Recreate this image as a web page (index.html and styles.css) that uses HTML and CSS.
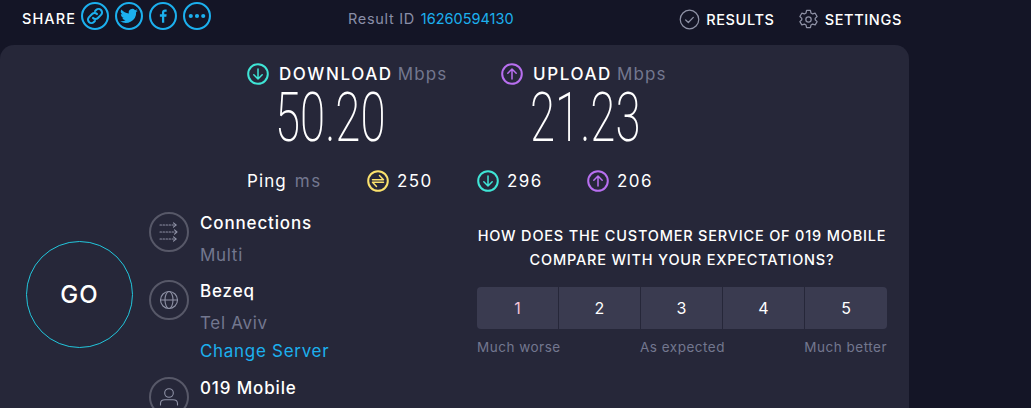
FILE: index.html
```html
<!DOCTYPE html>
<html lang="en">
<head>
<meta charset="utf-8">
<title>Speedtest Result</title>
<link rel="stylesheet" href="styles.css">
</head>
<body>
<header class="top">
  <div class="share">
    <span class="share-label">SHARE</span>
    <a class="share-btn"><svg viewBox="0 0 27 27"><circle cx="13.5" cy="13.5" r="12.5"/><path d="M11.600 15.400a3.300 3.300 0 0 0 4.700 0l3-3a3.300 3.300 0 0 0-4.700-4.700l-1.100 1.100M15.400 11.600a3.300 3.300 0 0 0-4.700 0l-3 3a3.300 3.300 0 0 0 4.700 4.700l1.100-1.100"/></svg></a>
    <a class="share-btn"><svg viewBox="0 0 27 27"><circle cx="13.5" cy="13.5" r="12.5"/><path class="fill" d="M22 8.400a7 7 0 0 1-2 .55 3.500 3.500 0 0 0 1.550-1.950 7 7 0 0 1-2.200.85 3.500 3.500 0 0 0-6 3.200 10 10 0 0 1-7.200-3.700 3.500 3.500 0 0 0 1.100 4.700 3.500 3.500 0 0 1-1.600-.45 3.500 3.500 0 0 0 2.800 3.450 3.500 3.500 0 0 1-1.550.06 3.500 3.500 0 0 0 3.250 2.430A7 7 0 0 1 5 18.500a10 10 0 0 0 15.400-8.900A7 7 0 0 0 22 8.400z"/></svg></a>
    <a class="share-btn"><svg viewBox="0 0 27 27"><circle cx="13.5" cy="13.5" r="12.500"/><path class="fill" d="M14.700 20v-5.800h2l.3-2.300h-2.300v-1.400c0-.7.200-1.100 1.100-1.100H17V7.300a12 12 0 0 0-1.500-.1c-1.800 0-3 1-3 3v1.700h-2v2.300h2V20z"/></svg></a>
    <a class="share-btn"><svg viewBox="0 0 27 27"><circle cx="13.500" cy="13.500" r="12.500"/><circle class="fill" cx="7.500" cy="13.500" r="2"/><circle class="fill" cx="13.500" cy="13.500" r="2"/><circle class="fill" cx="19.500" cy="13.500" r="2"/></svg></a>
  </div>
  <div class="result-id">Result ID <a class="link">16260594130</a></div>
  <nav class="nav">
    <a class="nav-item"><svg class="nav-icon" viewBox="0 0 22 22"><circle cx="11" cy="11" r="9.700"/><path d="M7 11.500l2.800 2.700L15 8.800"/></svg>RESULTS</a>
    <a class="nav-item"><svg class="nav-icon" viewBox="0 0 22 22"><path d="M9 1.500h4l.6 2.700 1.700 1 2.700-.8 2 3.400-2 2a6 6 0 0 1 0 1.400l2 2-2 3.400-2.700-.8-1.700 1-.6 2.700H9l-.6-2.700-1.700-1-2.700.8-2-3.400 2-2a6 6 0 0 1 0-1.400l-2-2 2-3.400 2.700.8 1.700-1z"/><circle cx="11" cy="11" r="2.800"/></svg>SETTINGS</a>
  </nav>
</header>

<main class="panel">
  <section class="speeds">
    <div class="speed">
      <div class="speed-head"><svg class="ic ic-lg teal" viewBox="0 0 22 22"><circle cx="11" cy="11" r="9.800"/><path class="arrow" d="M11 6v10M6.800 11.800L11 16l4.200-4.200"/></svg><span class="speed-name">DOWNLOAD</span><span class="unit">Mbps</span></div>
      <div class="speed-value"><span>50.20</span></div>
    </div>
    <div class="speed">
      <div class="speed-head"><svg class="ic ic-lg violet" viewBox="0 0 22 22"><circle cx="11" cy="11" r="9.800"/><path class="arrow" d="M11 16V6M6.800 10.200L11 6l4.200 4.200"/></svg><span class="speed-name">UPLOAD</span><span class="unit">Mbps</span></div>
      <div class="speed-value upload-value"><span>21.23</span></div>
    </div>
  </section>

  <section class="ping">
    <div class="ping-label">Ping <span class="unit">ms</span></div>
    <div class="ping-item"><svg class="ic yellow" viewBox="0 0 22 22"><circle cx="11" cy="11" r="9.800"/><path class="arrow" d="M5.500 9.700h11l-4-4.200M16.500 12.300h-11l4 4.200"/></svg>250</div>
    <div class="ping-item"><svg class="ic teal" viewBox="0 0 22 22"><circle cx="11" cy="11" r="9.800"/><path class="arrow" d="M11 6v10M6.800 11.800L11 16l4.200-4.200"/></svg>296</div>
    <div class="ping-item"><svg class="ic violet" viewBox="0 0 22 22"><circle cx="11" cy="11" r="9.800"/><path class="arrow" d="M11 16V6M6.800 10.200L11 6l4.200 4.200"/></svg>206</div>
  </section>

  <section class="body">
    <div class="go-col"><button class="go">GO</button></div>
    <div class="info">
      <div class="info-row">
        <svg class="info-icon" viewBox="0 0 40 40"><circle cx="20" cy="20" r="19"/><path class="thin dash" d="M11 13h16M11 20h17M11 27h16"/><path class="thin" d="M24.500 10.800l2.500 2.200-2.500 2.200M25.500 17.800l2.500 2.200-2.500 2.200M24.500 24.800l2.500 2.200-2.500 2.200"/></svg>
        <div><div class="info-title">Connections</div><div class="info-sub">Multi</div></div>
      </div>
      <div class="info-row">
        <svg class="info-icon" viewBox="0 0 40 40"><circle cx="20" cy="20" r="19"/><g class="thin"><circle cx="20" cy="20" r="8.500"/><ellipse cx="20" cy="20" rx="4" ry="8.500"/><path d="M11.500 20h17"/></g></svg>
        <div><div class="info-title">Bezeq</div><div class="info-sub">Tel Aviv</div><a class="change">Change Server</a></div>
      </div>
      <div class="info-row">
        <svg class="info-icon" viewBox="0 0 40 40"><circle cx="20" cy="20" r="19"/><g class="thin"><circle cx="20" cy="16" r="4.300"/><path d="M11.500 28v-1.500c0-2.500 2-3.800 4.500-3.800h8c2.500 0 4.500 1.300 4.500 3.800V28"/></g></svg>
        <div><div class="info-title">019 Mobile</div></div>
      </div>
    </div>
    <div class="survey">
      <h2 class="question">HOW DOES THE CUSTOMER SERVICE OF 019 MOBILE COMPARE WITH YOUR EXPECTATIONS?</h2>
      <div class="scale">
        <button class="rate first">1</button>
        <button class="rate">2</button>
        <button class="rate">3</button>
        <button class="rate">4</button>
        <button class="rate">5</button>
      </div>
      <div class="scale-labels"><span>Much worse</span><span>As expected</span><span>Much better</span></div>
    </div>
  </section>
</main>
</body>
</html>
```

FILE: styles.css
```css
* { box-sizing: border-box; }
html, body { height: 100%; }
body {
  margin: 0;
  overflow: hidden;
  background: #141526;
  color: #fff;
  font-family: Inter, "Liberation Sans", sans-serif;
}
svg { display: block; flex: none; fill: none; stroke-linecap: round; stroke-linejoin: round; }

.top { position: relative; display: flex; justify-content: space-between; height: 45px; width: 880px; margin-left: 22px; }
.share { display: flex; align-items: flex-start; gap: 6px; padding-top: 2px; }
.share-label { font-size: 14.5px; line-height: 36px; letter-spacing: 1.1px; margin: -1px -1px 0 0; font-weight: 500; }
.share-btn { width: 28px; height: 28px; }
.share-btn svg { stroke: #1cb0ee; stroke-width: 2; width: 28px; height: 28px; }
.share-btn .fill { fill: #1cb0ee; stroke: none; }
.result-id { position: absolute; left: 326px; top: 9px; font-size: 14.500px; line-height: 20px; color: #8a8ea8; letter-spacing: .7px; }
.link { color: #1cb0ee; letter-spacing: 0; margin-left: 1px; }
.nav { display: flex; align-items: flex-start; gap: 23px; padding-top: 9px; }
.nav-item { display: flex; align-items: center; gap: 6px; font-size: 14.500px; font-weight: 500; line-height: 21px; letter-spacing: .65px; }
.nav-icon { width: 21px; height: 21px; stroke: #8f92a6; stroke-width: 1.300; }

.panel { width: 909px; height: 500px; background: #262739; border-radius: 14px 14px 0 0; }
.ic { width: 22px; height: 22px; stroke-width: 2; }
.ic .arrow { stroke-width: 1.500; }
.teal { stroke: #3fe5d6; }
.violet { stroke: #b86ff0; }
.yellow { stroke: #fbe26d; }

.speeds { display: flex; padding: 18px 0 0 247px; gap: 54px; }
.speed { width: 200px; }
.speed-head { display: flex; align-items: center; height: 22px; font-size: 17px; }
.speed-name { margin-left: 10px; font-weight: 500; letter-spacing: 1.600px; }
.unit { color: #73778f; }
.speed-head .unit { margin-left: 5px; letter-spacing: 1.100px; }
.speed-value { height: 65px; font-family: Roboto, sans-serif; font-weight: 200; font-size: 68px; line-height: 66px; padding-left: 28px; }
.speed-value span { display: inline-block; transform: scaleX(.67); transform-origin: 0 50%; }
.upload-value { padding-left: 29px; }

.ping { display: flex; align-items: center; height: 22px; margin-top: 20px; padding-left: 247px; font-size: 17px; }
.ping-label { width: 120px; letter-spacing: 1.100px; }
.ping-label .unit { margin-left: 2px; letter-spacing: 1.600px; }
.ping-item { display: flex; align-items: center; gap: 8px; width: 110px; letter-spacing: 1.400px; }

.body { display: flex; margin-top: 10px; }
.go-col { width: 149px; padding: 39px 0 0 26px; }
.go { width: 107px; height: 107px; border-radius: 50%; background: transparent; border: 1px solid #22c6dc; color: #fff; font: 500 24px Inter, sans-serif; letter-spacing: 1px; padding: 0; }
.info { width: 328px; padding-top: 10px; }
.info-row { display: flex; gap: 11px; margin-bottom: 13.500px; }
.info-icon { width: 40px; height: 40px; stroke: #575868; stroke-width: 2; }
.info-icon .thin { stroke: #8f92a6; stroke-width: 1.100; }
.info-icon .dash { stroke-dasharray: 1.500 1.500; }
.info-title { font-size: 17px; line-height: 22px; font-weight: 500; letter-spacing: .85px; }
.info-sub { font-size: 17px; line-height: 24px; margin-top: 8.500px; color: #73778f; letter-spacing: .7px; }
.change { display: block; font-size: 17px; line-height: 22px; margin: 5px 0 2px; color: #1cb0ee; letter-spacing: .7px; }

.survey { width: 410px; padding-top: 22px; }
.question { margin: 0; font-size: 14.500px; font-weight: 500; line-height: 24px; text-align: center; letter-spacing: .8px; }
.scale { display: grid; grid-template-columns: repeat(4, 81px) 1fr; gap: 1px; margin-top: 15px; height: 42px; border-radius: 4px; overflow: hidden; }
.rate { background: #3a3b50; border: 0; color: #fff; font: 400 16px Inter, sans-serif; padding: 0; }
.rate.first { color: #f4c4d8; }
.scale-labels { display: flex; justify-content: space-between; margin-top: 8px; font-size: 13.500px; line-height: 20px; color: #73778f; letter-spacing: .5px; }
```
